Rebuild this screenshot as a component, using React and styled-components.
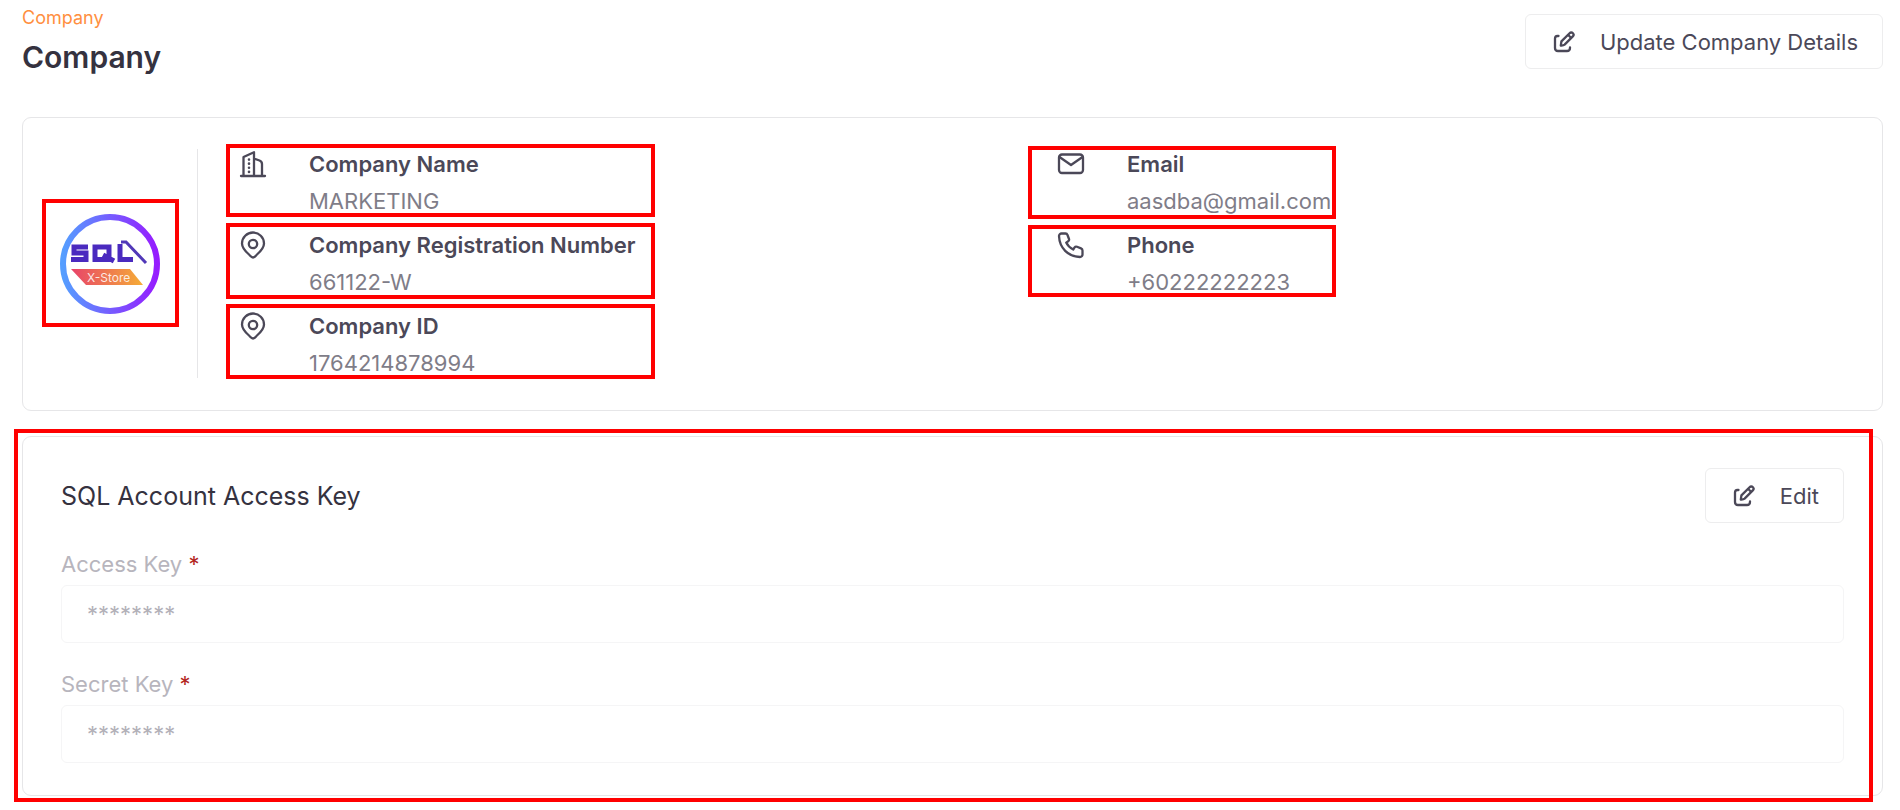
import React from "react";
import styled, { createGlobalStyle } from "styled-components";

const GlobalStyle = createGlobalStyle`
  *, *::before, *::after { box-sizing: border-box; }
  body {
    margin: 0;
    background: #fff;
    color: #4b4858;
    font-family: Inter, "Liberation Sans", sans-serif;
    font-size: 22px;
    line-height: 36px;
  }
`;

const Page = styled.main`
  padding: 5px 17px 8px 22px;
`;

const Header = styled.header`
  display: flex;
  justify-content: space-between;
  align-items: flex-start;
  padding-bottom: 38px;
`;

const Crumb = styled.a`
  display: block;
  color: #ff8f3f;
  font-size: 18px;
  line-height: 26px;
  text-decoration: none;
`;

const PageTitle = styled.h1`
  margin: 4px 0 0;
  color: #35323f;
  font-size: 30px;
  line-height: 44px;
  font-weight: 600;
`;

const OutlineButton = styled.button`
  display: inline-flex;
  align-items: center;
  gap: 24px;
  height: 55px;
  margin-top: ${(p) => (p.$offset ? "9px" : "0")};
  padding: 0 24px 0 26px;
  border: 1px solid #ededee;
  border-radius: 6px;
  background: #fff;
  color: #4b4858;
  font: inherit;
`;

const Card = styled.section`
  position: relative;
  border: 1px solid #e6e6e8;
  border-radius: 9px;
  background: #fff;
`;

const CompanyCard = styled(Card)`
  display: grid;
  grid-template-columns: 175px 1fr;
  padding: 28px 0 29px;
`;

const LogoCell = styled.div`
  position: relative;
  display: flex;
  align-items: center;
  justify-content: center;
  margin: 3px 0;
  border-right: 1px solid #e6e6e8;
`;

const Columns = styled.div`
  display: grid;
  grid-template-columns: 1fr 1fr;
  padding: 0 8px 0 40px;
`;

const InfoList = styled.dl`
  display: flex;
  flex-direction: column;
  gap: 8px;
  margin: 0;
`;

const InfoItem = styled.div`
  position: relative;
  display: grid;
  grid-template-columns: 71px 1fr;
  row-gap: 1px;
`;

const InfoIcon = styled.span`
  grid-row: span 2;
  padding: 4px 0 0 1px;
  line-height: 0;
`;

const Term = styled.dt`
  font-weight: 600;
`;

const Value = styled.dd`
  margin: 0;
  color: #7f7d88;
`;

const Highlight = styled.span`
  position: absolute;
  top: ${(p) => p.$top}px;
  bottom: ${(p) => p.$bottom}px;
  left: ${(p) => p.$left}px;
  ${(p) => (p.$width ? `width: ${p.$width}px;` : `right: ${p.$right}px;`)}
  border: 4px solid #f00;
  pointer-events: none;
`;

const KeyCard = styled(Card)`
  margin-top: 25px;
  padding: 31px 38px 32px;
`;

const KeyHeader = styled.div`
  display: flex;
  align-items: center;
  justify-content: space-between;
`;

const KeyTitle = styled.h2`
  margin: 0;
  color: #35323f;
  font-size: 25px;
  font-weight: 400;
`;

const Fields = styled.div`
  display: grid;
  gap: 23px;
  margin-top: 23px;
`;

const Field = styled.div`
  display: grid;
  gap: 3px;
`;

const Label = styled.label`
  color: #b7b5bd;
`;

const Required = styled.span`
  color: #b3261e;
`;

const KeyInput = styled.input`
  width: 100%;
  height: 58px;
  padding: 0 25px;
  border: 1px solid #f5f5f6;
  border-radius: 6px;
  background: #fff;
  color: #b3b1b9;
  font: inherit;
`;

const stroke = {
  fill: "none",
  stroke: "currentColor",
  strokeWidth: 2.3,
  strokeLinecap: "round",
  strokeLinejoin: "round",
};

const EditIcon = () => (
  <svg width="24" height="24" viewBox="0 0 24 24" {...stroke} aria-hidden="true">
    <path d="M6.500 6H5.500C3.600 6 3 6.600 3 8.500V18C3 20.300 3.700 21 6 21H15C17.300 21 18 20.300 18 18V17.500" />
    <path d="M8.800 15.700L9.400 11.400L17.600 3.200C18.600 2.200 20 2.300 20.900 3.200C21.800 4.100 21.800 5.400 20.800 6.400L12.600 14.600C11.500 15.500 10.500 15.500 8.800 15.700Z" />
    <path d="M16.200 5L19 7.800" />
  </svg>
);

const BuildingIcon = () => (
  <svg width="28" height="28" viewBox="0 0 28 28" {...stroke} aria-hidden="true">
    <path d="M2 26H26M4.500 26V7L15 2.200V26M15 8.500L20.500 10.500Q23 11.500 23 14V26" />
    <path d="M10 9.500V23" strokeWidth="2.600" strokeDasharray="0.100 4" />
  </svg>
);

const PinIcon = () => (
  <svg width="28" height="28" viewBox="0 0 28 28" {...stroke} aria-hidden="true">
    <path d="M14 26.500C12.500 26.500 11.500 25 10 23.500C6 20 3 16.800 3 12.500A11 11 0 0 1 25 12.500C25 16.800 22 20 18 23.500C16.500 25 15.500 26.500 14 26.500Z" />
    <circle cx="14" cy="13" r="4.200" />
  </svg>
);

const MailIcon = () => (
  <svg width="28" height="28" viewBox="0 0 28 28" {...stroke} aria-hidden="true">
    <rect x="2" y="4.500" width="24" height="18.500" rx="3" />
    <path d="M2.500 7L14 15L25.500 7" />
  </svg>
);

const PhoneIcon = () => (
  <svg width="28" height="28" viewBox="0 0 28 28" {...stroke} aria-hidden="true">
    <path d="M4.500 2.500H8.500Q10 2.500 10.500 4L12 8Q12.500 9.500 11.200 10.300L9.200 11.600C10.700 14.800 13 17 16.200 18.500L17.600 16.400Q18.500 15.200 20 15.800L24 17.400Q25.500 18 25.500 19.500V23.500A2.500 2.500 0 0 1 23 26C11 25.500 2.500 17 2 5A2.500 2.500 0 0 1 4.500 2.500Z" />
  </svg>
);

const Logo = () => (
  <svg width="100" height="100" viewBox="0 0 100 100" role="img" aria-label="SQL X-Store">
    <defs>
      <linearGradient id="ring">
        <stop offset="0" stopColor="#559eff" />
        <stop offset="1" stopColor="#961cff" />
      </linearGradient>
      <linearGradient id="banner">
        <stop offset="0" stopColor="#e8436a" />
        <stop offset="1" stopColor="#f5ad36" />
      </linearGradient>
    </defs>
    <circle cx="50" cy="50" r="47" fill="none" stroke="url(#ring)" strokeWidth="6" />
    <g fill="none" stroke="#4a2abf" strokeWidth="5">
      <path d="M28 33H14V39H26V45.500H11M35 33H49V45.500H35ZM43 41L54 47M60 30V45.500H73" />
      <path d="M61 28H66L86 49" strokeWidth="3" stroke="#5138b8" />
    </g>
    <path d="M11 55H70L83 71H26Z" fill="url(#banner)" />
    <text x="27" y="68" fill="#fff" fillOpacity="0.85" fontSize="12">X-Store</text>
  </svg>
);

const leftInfo = [
  { icon: BuildingIcon, term: "Company Name", value: "MARKETING", top: -2, bottom: 2 },
  { icon: PinIcon, term: "Company Registration Number", value: "661122-W", top: -4, bottom: 1 },
  { icon: PinIcon, term: "Company ID", value: "1764214878994", top: -4, bottom: 2 },
];

const rightInfo = [
  { icon: MailIcon, term: "Email", value: "aasdba@gmail.com", top: 0, bottom: 0 },
  { icon: PhoneIcon, term: "Phone", value: "+60222222223", top: -2, bottom: 3 },
];

const Info = ({ items, left, width }) => (
  <InfoList>
    {items.map(({ icon: Icon, term, value, top, bottom }) => (
      <InfoItem key={term}>
        <InfoIcon><Icon /></InfoIcon>
        <Term>{term}</Term>
        <Value>{value}</Value>
        <Highlight $top={top} $bottom={bottom} $left={left} $width={width} />
      </InfoItem>
    ))}
  </InfoList>
);

const SecretField = ({ id, label }) => (
  <Field>
    <Label htmlFor={id}>{label} <Required>*</Required></Label>
    <KeyInput id={id} type="text" defaultValue="********" disabled />
  </Field>
);

export default function App() {
  return (
    <>
      <GlobalStyle />
      <Page>
        <Header>
          <div>
            <Crumb href="#company">Company</Crumb>
            <PageTitle>Company</PageTitle>
          </div>
          <OutlineButton type="button" $offset><EditIcon />Update Company Details</OutlineButton>
        </Header>
        <CompanyCard>
          <LogoCell>
            <Logo />
            <Highlight $top={50} $bottom={51} $left={19} $right={18} />
          </LogoCell>
          <Columns>
            <Info items={leftInfo} left={-12} width={429} />
            <Info items={rightInfo} left={-28} width={308} />
          </Columns>
        </CompanyCard>
        <KeyCard>
          <KeyHeader>
            <KeyTitle>SQL Account Access Key</KeyTitle>
            <OutlineButton type="button"><EditIcon />Edit</OutlineButton>
          </KeyHeader>
          <Fields>
            <SecretField id="access-key" label="Access Key" />
            <SecretField id="secret-key" label="Secret Key" />
          </Fields>
          <Highlight $top={-8} $bottom={-7} $left={-9} $right={9} />
        </KeyCard>
      </Page>
    </>
  );
}
